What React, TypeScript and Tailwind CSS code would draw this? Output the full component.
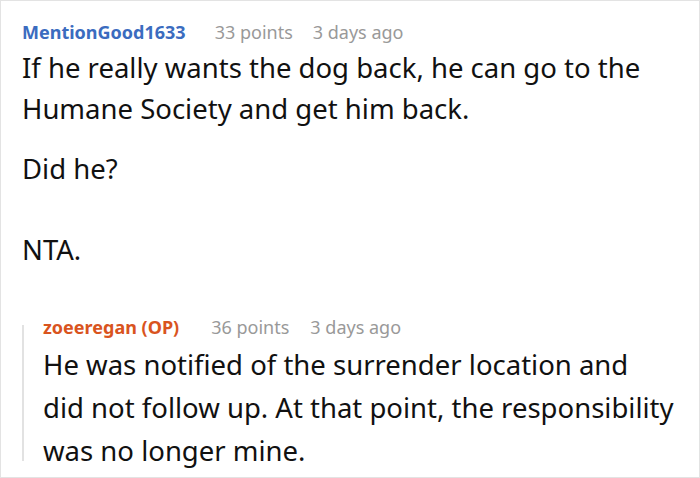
export default function App() {
  return (
    <div
      className="w-[700px] h-[478px] border border-[#e3e3e3] bg-white overflow-hidden text-[#111]"
      style={{ fontFamily: '"Noto Sans", "Open Sans", sans-serif' }}
    >
      <div className="pl-[21px] pr-2 pt-[19px]">
        {/* top comment */}
        <div className="flex items-center h-6 text-[18px] leading-6">
          <span className="font-bold text-[#3b6cbf]">MentionGood1633</span>
          <span className="ml-[29px] text-[#999]">33 points</span>
          <span className="ml-[20px] text-[#999]">3 days ago</span>
        </div>
        <div className="mt-[3px] text-[27.5px] leading-[41px]">
          <p>If he really wants the dog back, he can go to the Humane Society and get him back.</p>
          <p className="mt-[19px]">Did he?</p>
          <p className="mt-[40px]">NTA.</p>
        </div>

        {/* reply */}
        <div className="mt-[45px] flex">
          <div className="w-[2px] shrink-0 bg-[#e2e2e2] mt-[10px] mb-[11px]" />
          <div className="pl-[19px]">
            <div className="flex items-center h-6 text-[18px] leading-6">
              <span className="font-bold text-[#d9541e]">zoeeregan (OP)</span>
              <span className="ml-[32px] text-[#999]">36 points</span>
              <span className="ml-[21px] text-[#999]">3 days ago</span>
            </div>
            <p className="mt-[4px] text-[27.5px] leading-[43px]">
              He was notified of the surrender location and
              <br />
              did not follow up. At that point, the responsibility was no longer mine.
            </p>
          </div>
        </div>
      </div>
    </div>
  );
}
